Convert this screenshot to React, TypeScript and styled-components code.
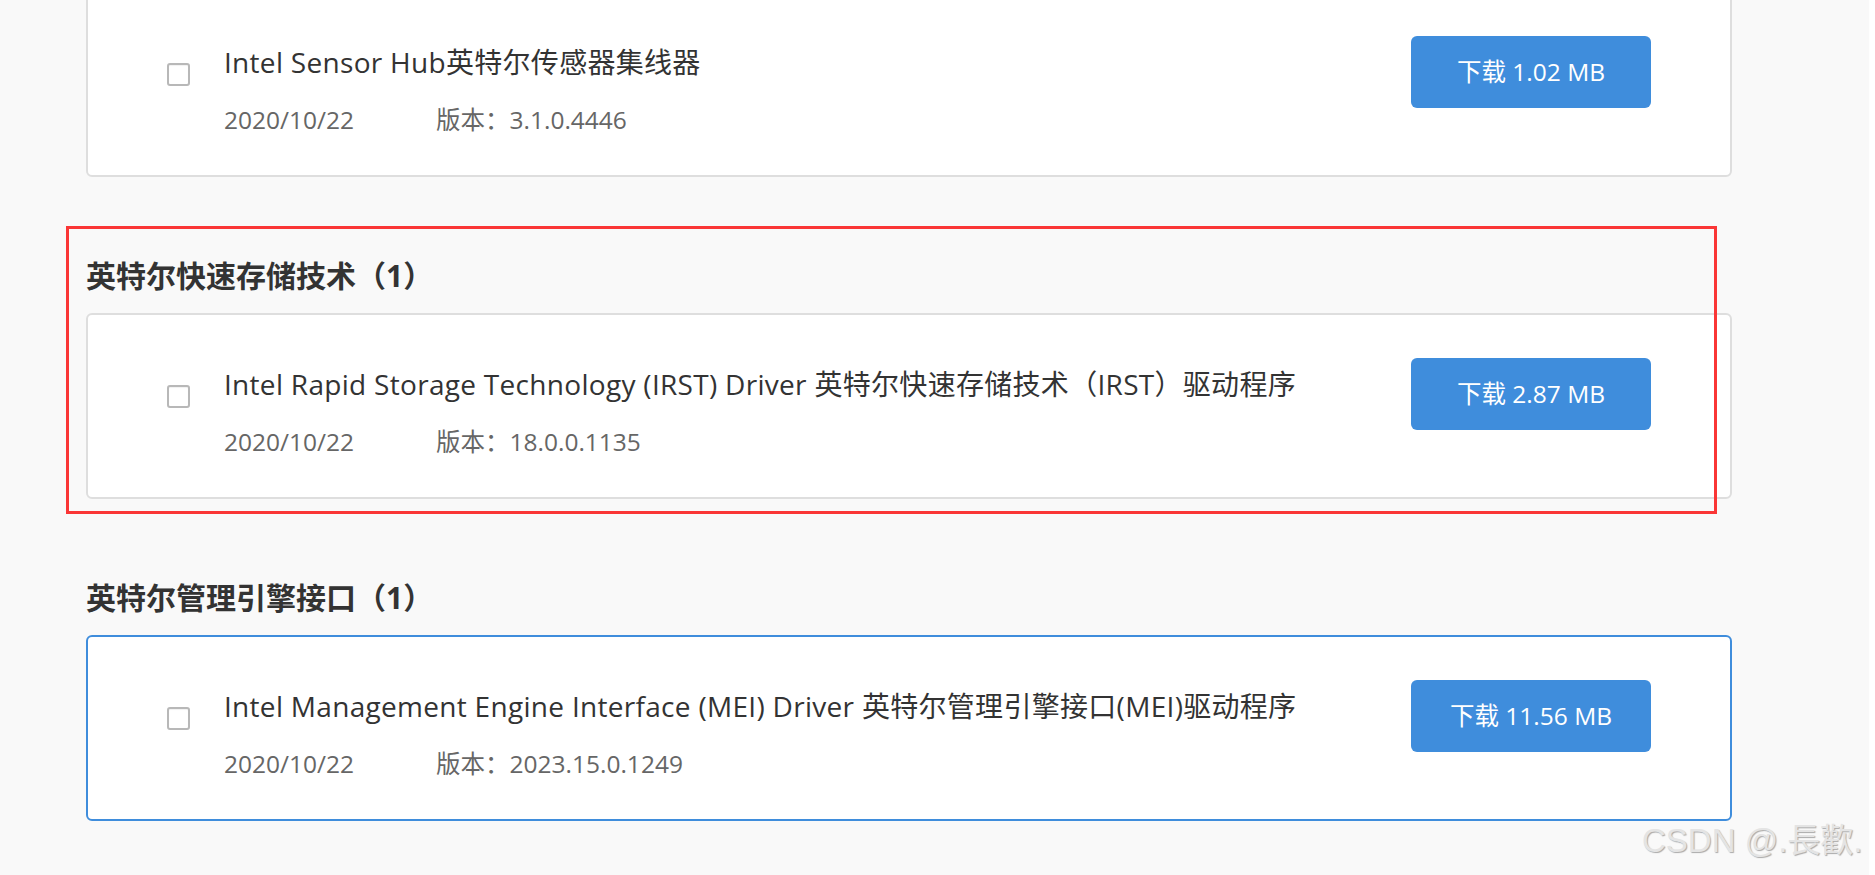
import React from "react";
import styled, { createGlobalStyle } from "styled-components";

const GlobalStyle = createGlobalStyle`
  html, body {
    margin: 0;
    padding: 0;
    background: #ffffff;
  }
  * { box-sizing: border-box; }
`;

const Page = styled.div`
  position: relative;
  width: 1869px;
  height: 875px;
  overflow: hidden;
  background: #f9f9f9;
  padding-left: 86px;
  font-family: "Open Sans", "Noto Sans CJK SC", sans-serif;
`;

const List = styled.div`
  display: flex;
  flex-direction: column;
  gap: 76px;
  margin-top: -9px;
`;

const Section = styled.section`
  position: relative;
  display: flex;
  flex-direction: column;
  gap: 15px;
`;

const Heading = styled.h2`
  margin: 0;
  font-size: 30px;
  line-height: 45px;
  font-weight: 700;
  color: #333333;
`;

const Card = styled.div<{ $active?: boolean }>`
  width: 1646px;
  display: flex;
  align-items: flex-start;
  justify-content: space-between;
  padding: 43px 79px 37px 79px;
  background: #ffffff;
  border: 2px solid ${(p) => (p.$active ? "#3f8ddc" : "#dedede")};
  border-radius: 6px;
`;

const Left = styled.div`
  display: flex;
  align-items: flex-start;
`;

const Check = styled.input.attrs({ type: "checkbox" })`
  appearance: none;
  -webkit-appearance: none;
  width: 23px;
  height: 23px;
  margin: 27px 34px 0 0;
  border: 2px solid #b8b8b8;
  border-radius: 3px;
  background: #ffffff;
  box-shadow: inset 0 1px 1px rgba(0, 0, 0, 0.06);
  flex: none;
`;

const TextBlock = styled.div`
  margin-top: 6px;
  display: flex;
  flex-direction: column;
  gap: 20px;
`;

const Title = styled.div`
  font-size: 28px;
  line-height: 40px;
  letter-spacing: 0.3px;
  color: #333333;
  white-space: nowrap;
`;

const Meta = styled.div`
  display: flex;
  font-size: 24.5px;
  line-height: 36px;
  color: #666666;
  white-space: nowrap;
`;

const DateText = styled.span`
  width: 212px;
`;

const DownloadButton = styled.button`
  width: 240px;
  height: 72px;
  flex: none;
  border: none;
  border-radius: 6px;
  background: #3f8ddc;
  color: #ffffff;
  font-family: "Open Sans", "Noto Sans CJK SC", sans-serif;
  font-size: 24.5px;
  line-height: 1;
  padding: 0;
  cursor: pointer;
`;

const Annotation = styled.div`
  position: absolute;
  top: -27px;
  left: -20px;
  width: 1651px;
  height: 288px;
  border: 3px solid #fa3636;
  pointer-events: none;
`;

const Watermark = styled.div`
  position: absolute;
  left: 1642px;
  top: 822px;
  font-family: "Liberation Sans", "Noto Sans CJK TC", sans-serif;
  font-size: 33px;
  line-height: 1.15;
  color: #e4e4e4;
  text-shadow: 1px 1px 1px #a9a9a9;
  white-space: nowrap;
  pointer-events: none;
`;

type Driver = {
  title: string;
  date: string;
  version: string;
  size: string;
};

type Group = {
  heading?: string;
  active?: boolean;
  annotated?: boolean;
  driver: Driver;
};

const groups: Group[] = [
  {
    driver: {
      title: "Intel Sensor Hub英特尔传感器集线器",
      date: "2020/10/22",
      version: "3.1.0.4446",
      size: "1.02 MB",
    },
  },
  {
    heading: "英特尔快速存储技术（1）",
    annotated: true,
    driver: {
      title:
        "Intel Rapid Storage Technology (IRST) Driver 英特尔快速存储技术（IRST）驱动程序",
      date: "2020/10/22",
      version: "18.0.0.1135",
      size: "2.87 MB",
    },
  },
  {
    heading: "英特尔管理引擎接口（1）",
    active: true,
    driver: {
      title:
        "Intel Management Engine Interface (MEI) Driver 英特尔管理引擎接口(MEI)驱动程序",
      date: "2020/10/22",
      version: "2023.15.0.1249",
      size: "11.56 MB",
    },
  },
];

function DriverCard({ driver, active }: { driver: Driver; active?: boolean }) {
  return (
    <Card $active={active}>
      <Left>
        <Check aria-label={driver.title} />
        <TextBlock>
          <Title>{driver.title}</Title>
          <Meta>
            <DateText>{driver.date}</DateText>
            <span>版本：{driver.version}</span>
          </Meta>
        </TextBlock>
      </Left>
      <DownloadButton>下载 {driver.size}</DownloadButton>
    </Card>
  );
}

export default function App() {
  return (
    <>
      <GlobalStyle />
      <Page>
        <List>
          {groups.map((g, i) => (
            <Section key={i}>
              {g.annotated && <Annotation />}
              {g.heading && <Heading>{g.heading}</Heading>}
              <DriverCard driver={g.driver} active={g.active} />
            </Section>
          ))}
        </List>
        <Watermark>CSDN @.長歡.</Watermark>
      </Page>
    </>
  );
}
